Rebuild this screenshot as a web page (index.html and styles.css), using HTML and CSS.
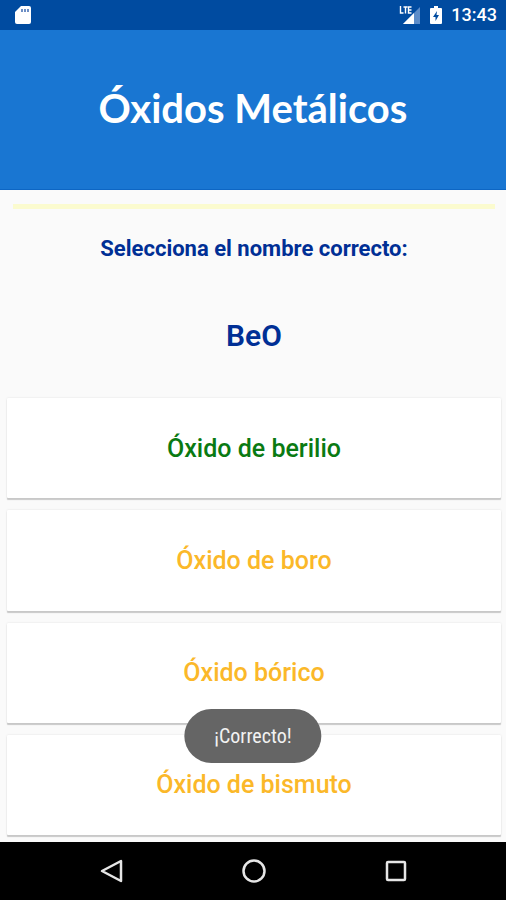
FILE: index.html
```html
<!DOCTYPE html>
<html lang="es">
<head>
    <meta charset="UTF-8">
    <meta name="viewport" content="width=device-width, initial-scale=1.0">
    <title>Óxidos Metálicos</title>
    <link rel="stylesheet" href="styles.css">
</head>
<body>
    <div class="status-bar">
        <svg class="sd-icon" width="18" height="20" viewBox="0 0 18 20">
            <path d="M7 1h8a2 2 0 0 1 2 2v14a2 2 0 0 1-2 2H3a2 2 0 0 1-2-2V7z" fill="#fff"/>
            <path d="M8 4v3M11 4v3M14 4v3" stroke="#6d8fc5" stroke-width="2"/>
        </svg>
        <div class="status-right">
            <svg width="22" height="20" viewBox="0 0 22 20">
                <path d="M21 2v17H4z" fill="#5c8cc9"/>
                <path d="M15 8v11H4z" fill="#fff"/>
                <path d="M1.500 1v7H4.500M4.500 2h4M6.500 2v6.500M12.500 2H9.500v6h3M9.500 5h3" fill="none" stroke="#fff" stroke-width="1.400"/>
            </svg>
            <svg width="12" height="20" viewBox="0 0 12 20">
                <path d="M4 1h4v2h3a1 1 0 0 1 1 1v14a1 1 0 0 1-1 1H1a1 1 0 0 1-1-1V4a1 1 0 0 1 1-1h3z" fill="#fff"/>
                <path d="M7 6l-4 6h2.500v4L9 10H6.500z" fill="#004ba0"/>
            </svg>
            <span class="clock">13:43</span>
        </div>
    </div>

    <header>
        <h1>Óxidos Metálicos</h1>
    </header>

    <main>
        <hr class="progress-line">
        <h2>Selecciona el nombre correcto:</h2>
        <div id="question">BeO</div>
        <div class="options">
            <button class="option correct">Óxido de berilio</button>
            <button class="option">Óxido de boro</button>
            <button class="option">Óxido bórico</button>
            <button class="option">Óxido de bismuto</button>
        </div>
        <div class="toast" role="status">¡Correcto!</div>
    </main>

    <nav>
        <button aria-label="Atrás">
            <svg width="26" height="26" viewBox="0 0 26 26"><path d="M22 3v20L3 13z"/></svg>
        </button>
        <button aria-label="Inicio">
            <svg width="26" height="26" viewBox="0 0 26 26"><circle cx="13" cy="13" r="10.500"/></svg>
        </button>
        <button aria-label="Recientes">
            <svg width="26" height="26" viewBox="0 0 26 26"><rect x="4" y="4" width="18" height="18" rx="1"/></svg>
        </button>
    </nav>
</body>
</html>
```

FILE: styles.css
```css
* {
    box-sizing: border-box;
}
body {
    font-family: Roboto, sans-serif;
    margin: 0;
    min-height: 100vh;
    display: flex;
    flex-direction: column;
    background-color: #fafafa;
    color: #002f95;
    text-align: center;
}
button {
    font-family: inherit;
    border: none;
    padding: 0;
    cursor: pointer;
}
.status-bar {
    display: flex;
    justify-content: space-between;
    align-items: center;
    height: 30px;
    padding: 0 9px 0 14px;
    background-color: #004ba0;
    color: white;
}
.status-right {
    display: flex;
    align-items: center;
    gap: 9px;
}
.clock {
    font-size: 18px;
    font-weight: 500;
    line-height: 32px;
}
header {
    display: flex;
    align-items: center;
    justify-content: center;
    height: 160px;
    padding-bottom: 4px;
    background-color: #1976d2;
    border-bottom: 1px solid #0d66c4;
    color: white;
}
h1 {
    font-family: Lato, sans-serif;
    font-size: 40px;
    font-weight: 700;
    margin: 0;
}
main {
    position: relative;
    flex: 1;
    display: flex;
    flex-direction: column;
    padding: 14px 5px 7px 7px;
}
.progress-line {
    width: calc(100% - 12px);
    height: 5px;
    margin: 0 6px;
    border: none;
    background-color: #fbfbcf;
}
h2 {
    font-size: 22px;
    font-weight: 700;
    line-height: 28px;
    margin: 26px 0 0;
}
#question {
    font-size: 30px;
    font-weight: 600;
    line-height: 36px;
    margin: 55px 0 44px;
}
.options {
    flex: 1;
    display: flex;
    flex-direction: column;
    gap: 12px;
}
.option {
    flex: 1;
    min-height: 80px;
    background-color: white;
    border-radius: 1px;
    box-shadow: 0 2px 1px #c8c8c8, 0 0 2px #dedede;
    color: #fbb829;
    font-size: 25px;
    font-weight: 500;
}
.option.correct {
    color: #0a7a12;
}
.toast {
    position: absolute;
    bottom: 79px;
    left: 50%;
    transform: translateX(-50%);
    padding: 0 30px;
    border-radius: 27px;
    background-color: #656565;
    color: #f2f2f2;
    font-family: "Roboto Condensed", Roboto, sans-serif;
    font-size: 20px;
    line-height: 54px;
}
nav {
    display: flex;
    justify-content: center;
    gap: 116px;
    height: 58px;
    padding-left: 2px;
    background-color: black;
}
nav button {
    display: flex;
    align-items: center;
    background: none;
}
nav svg {
    fill: none;
    stroke: #e6e6e6;
    stroke-width: 2.5;
    stroke-linejoin: round;
}
```
